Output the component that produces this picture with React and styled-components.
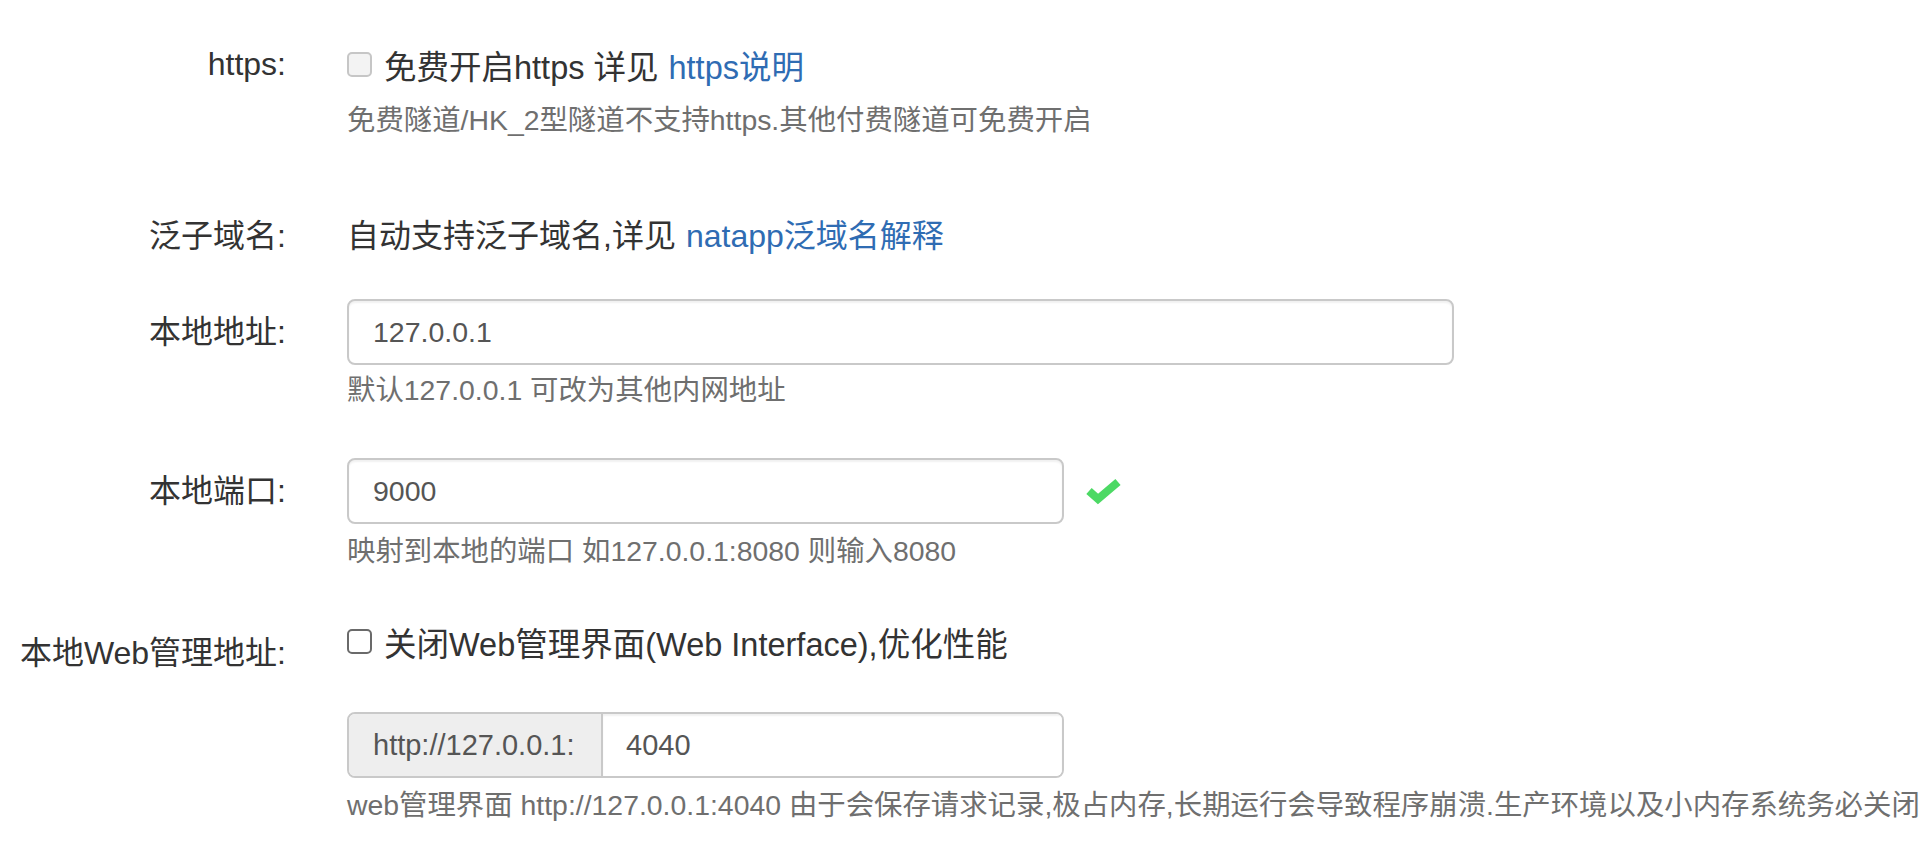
import React from "react";
import styled, { createGlobalStyle } from "styled-components";

const GlobalStyle = createGlobalStyle`
  body {
    margin: 0;
    background: #fff;
    font-family: "Liberation Sans", "Noto Sans CJK SC", sans-serif;
    color: #333;
  }
`;

const Form = styled.div`
  padding-top: 44px;
  width: 1924px;
`;

const Row = styled.div`
  display: grid;
  grid-template-columns: 286px 1fr;
  column-gap: 61px;
  margin-top: ${({ $top }) => $top || 0}px;
`;

const Label = styled.div`
  text-align: right;
  font-size: 32px;
  line-height: ${({ $line }) => $line || 40}px;
  padding-top: ${({ $pad }) => $pad || 0}px;
  color: #333;
  white-space: nowrap;
`;

const Control = styled.div`
  display: flex;
  flex-direction: column;
  align-items: flex-start;
  min-width: 0;
`;

const Text = styled.div`
  font-size: 32px;
  line-height: 40px;
  color: #333;
  white-space: nowrap;
`;

const CheckLine = styled.label`
  display: flex;
  align-items: center;
  gap: 12px;
  height: 40px;
  font-size: 32.5px;
  color: #333;
  white-space: nowrap;
`;

const Box = styled.span`
  width: 25px;
  height: 25px;
  box-sizing: border-box;
  border-radius: 5px;
  border: 2px solid ${({ $disabled }) => ($disabled ? "#c6c6c6" : "#6a6a6a")};
  background: ${({ $disabled }) => ($disabled ? "#f3f3f3" : "#fff")};
  flex-shrink: 0;
`;

const Link = styled.a`
  color: #2f6cb3;
  text-decoration: none;
  margin-left: 10px;
`;

const Help = styled.div`
  font-size: 28.4px;
  line-height: 40px;
  color: #6f6f6f;
  margin-top: ${({ $top }) => $top || 0}px;
  white-space: nowrap;
`;

const Input = styled.input`
  box-sizing: border-box;
  width: ${({ $w }) => $w}px;
  height: 66px;
  border: 2px solid #c9c9c9;
  border-radius: 8px;
  box-shadow: inset 0 2px 2px rgba(0, 0, 0, 0.06);
  padding: 0 24px;
  font-family: inherit;
  font-size: 28.5px;
  color: #555;
  background: #fff;
  outline: none;
`;

const InputLine = styled.div`
  display: flex;
  align-items: center;
  gap: 22px;
`;

const Group = styled.div`
  display: flex;
  width: 717px;
  height: 66px;
  margin-top: 51px;
  box-sizing: border-box;
  border: 2px solid #c9c9c9;
  border-radius: 8px;
  overflow: hidden;
`;

const Addon = styled.span`
  display: flex;
  align-items: center;
  width: 254px;
  box-sizing: border-box;
  padding-left: 24px;
  background: #eee;
  border-right: 2px solid #c9c9c9;
  font-size: 29px;
  color: #555;
`;

const GroupInput = styled.input`
  flex: 1;
  border: none;
  padding: 0 23px;
  font-family: inherit;
  font-size: 29px;
  color: #555;
  outline: none;
  box-shadow: inset 0 2px 2px rgba(0, 0, 0, 0.06);
`;

const Ok = () => (
  <svg width="36" height="30" viewBox="0 0 36 30">
    <polyline
      points="3,15 12,23 32,6"
      fill="none"
      stroke="#4cd964"
      strokeWidth="8"
      strokeLinejoin="miter"
    />
  </svg>
);

const App = () => (
  <>
    <GlobalStyle />
    <Form>
      <Row>
        <Label>https:</Label>
        <Control>
          <CheckLine>
            <Box $disabled />
            <span>
              免费开启https 详见<Link>https说明</Link>
            </span>
          </CheckLine>
          <Help $top={16}>免费隧道/HK_2型隧道不支持https.其他付费隧道可免费开启</Help>
        </Control>
      </Row>

      <Row $top={76}>
        <Label>泛子域名:</Label>
        <Control>
          <Text>
            自动支持泛子域名,详见<Link>natapp泛域名解释</Link>
          </Text>
        </Control>
      </Row>

      <Row $top={43}>
        <Label $line={66}>本地地址:</Label>
        <Control>
          <Input $w={1107} defaultValue="127.0.0.1" />
          <Help $top={5}>默认127.0.0.1 可改为其他内网地址</Help>
        </Control>
      </Row>

      <Row $top={48}>
        <Label $line={66}>本地端口:</Label>
        <Control>
          <InputLine>
            <Input $w={717} defaultValue="9000" />
            <Ok />
          </InputLine>
          <Help $top={7}>映射到本地的端口 如127.0.0.1:8080 则输入8080</Help>
        </Control>
      </Row>

      <Row $top={50}>
        <Label $pad={12}>本地Web管理地址:</Label>
        <Control>
          <CheckLine>
            <Box />
            <span>关闭Web管理界面(Web Interface),优化性能</span>
          </CheckLine>
          <Group>
            <Addon>http://127.0.0.1:</Addon>
            <GroupInput defaultValue="4040" />
          </Group>
          <Help $top={7}>
            web管理界面 http://127.0.0.1:4040 由于会保存请求记录,极占内存,长期运行会导致程序崩溃.生产环境以及小内存系统务必关闭
          </Help>
        </Control>
      </Row>
    </Form>
  </>
);

export default App;
